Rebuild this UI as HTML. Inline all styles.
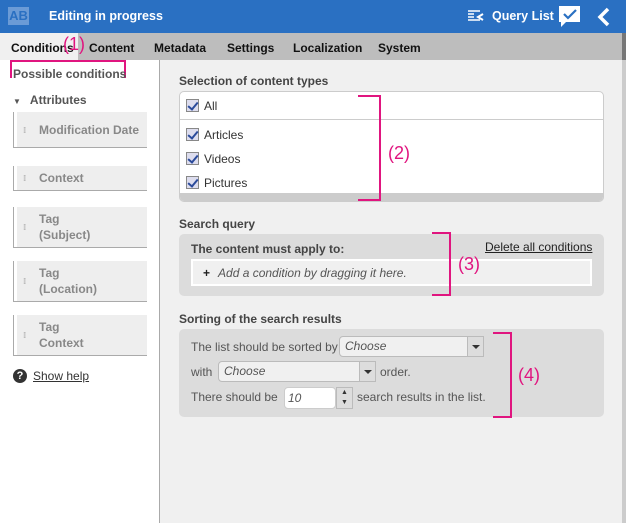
<!DOCTYPE html>
<html><head><meta charset="utf-8"><style>
*{box-sizing:border-box;margin:0;padding:0}
body{width:626px;height:523px;overflow:hidden;font-family:"Liberation Sans",sans-serif;font-size:12px;color:#333;background:#f0f0f0;position:relative}
.a{position:absolute}
.hdr{left:0;top:0;width:626px;height:33px;background:#2a70c2;color:#fff}
.tabs{left:0;top:33px;width:626px;height:27px;background:#bdbdbd}
.tab{position:absolute;top:8px;font-weight:bold;font-size:12px;color:#111}
.left{left:0;top:60px;width:160px;height:463px;background:#fff;border-right:1px solid #aaa}
.item{position:absolute;left:13px;width:134px;border-left:1px solid #aaa;border-bottom:1px solid #aaa;background:#fff}
.item div{margin-left:3px;background:#eee;color:#888;font-weight:bold;font-size:12px;padding:4px 0 4px 22px;line-height:16px;position:relative}
.item div:before{content:"⁞⁞";position:absolute;left:6px;top:50%;margin-top:-7px;font-size:8px;color:#bbb;letter-spacing:-2px}
.pink{position:absolute;border:2px solid #e0157f;border-left:none}
.pl{position:absolute;color:#e0157f;font-size:18px}
.h{position:absolute;font-weight:bold;font-size:12px;color:#444}
.cb{display:inline-block;width:13px;height:13px;border:1px solid #888;background:#dde;vertical-align:-2px;margin-right:5px;position:relative}
.cb:after{content:"";position:absolute;left:3px;top:0px;width:4px;height:8px;border:solid #2a4a9a;border-width:0 2px 2px 0;transform:rotate(40deg)}
.sel{position:absolute;height:21px;background:#f0f0f0;border:1px solid #bbb;border-radius:4px 0 0 4px;font-style:italic;color:#555;padding:2px 5px;font-size:12px}
.sel b{position:absolute;right:0;top:0;width:16px;height:19px;background:#ddd;border-left:1px solid #bbb}
.sel b:after{content:"";position:absolute;left:4px;top:8px;border:4px solid transparent;border-top:4px solid #333;border-bottom:none}
</style></head><body>
<div class="a hdr">
 <div class="a" style="left:8px;top:7px;width:21px;height:18px;background:#6b9bd6;color:#2a70c2;font-weight:bold;font-size:13px;text-align:center;line-height:18px">AB</div>
 <div class="a" style="left:49px;top:9px;font-weight:bold;font-size:12.5px">Editing in progress</div>
 <svg class="a" style="left:468px;top:10px" width="16" height="12"><path d="M0 1h12M0 4h6M0 7h6M0 10h12" stroke="#fff" stroke-width="1.5"/><path d="M15 4l-5 3 5 3" stroke="#fff" stroke-width="2" fill="none"/></svg>
 <div class="a" style="left:492px;top:9px;font-weight:bold;font-size:12.5px">Query List</div>
 <svg class="a" style="left:558px;top:5px" width="24" height="24"><path d="M1 1h21v16H8l-5 5v-5H1z" fill="#fff"/><path d="M6 9l4 4 8-8" stroke="#2a70c2" stroke-width="2.2" fill="none"/></svg>
 <svg class="a" style="left:597px;top:7px" width="14" height="20"><path d="M11 2L3 10l8 8" stroke="#fff" stroke-width="3.5" fill="none"/></svg>
</div>
<div class="a tabs">
 <div class="a" style="left:0;top:0;width:78px;height:27px;background:#f0f0f0"></div>
 <span class="tab" style="left:11px">Conditions</span>
 <span class="tab" style="left:89px">Content</span>
 <span class="tab" style="left:154px">Metadata</span>
 <span class="tab" style="left:227px">Settings</span>
 <span class="tab" style="left:293px">Localization</span>
 <span class="tab" style="left:378px">System</span>
</div>
<div class="pl" style="left:63px;top:34px">(1)</div>
<div class="a" style="left:622px;top:33px;width:4px;height:490px;background:#ccc"></div>
<div class="a" style="left:622px;top:33px;width:4px;height:27px;background:#777"></div>
<div class="a left">
 <div class="a" style="left:10px;top:0;width:116px;height:18px;border:2px solid #e0157f;border-bottom:none"></div>
 <div class="a" style="left:13px;top:7px;font-weight:bold;color:#555;font-size:12px">Possible conditions</div>
 <div class="a" style="left:13px;top:33px;font-weight:bold;color:#555;font-size:12px"><span style="font-size:8px;margin-right:9px">▼</span>Attributes</div>
 <div class="item" style="top:52px"><div style="padding-top:10px;padding-bottom:9px">Modification Date</div></div>
 <div class="item" style="top:106px"><div>Context</div></div>
 <div class="item" style="top:147px"><div>Tag<br>(Subject)</div></div>
 <div class="item" style="top:201px"><div>Tag<br>(Location)</div></div>
 <div class="item" style="top:255px"><div>Tag<br>Context</div></div>
 <div class="a" style="left:13px;top:309px;width:14px;height:14px;border-radius:50%;background:#333;color:#fff;font-weight:bold;font-size:11px;text-align:center;line-height:14px">?</div>
 <div class="a" style="left:33px;top:309px;text-decoration:underline;color:#333">Show help</div>
</div>

<div class="h" style="left:179px;top:74px">Selection of content types</div>
<div class="a" style="left:179px;top:91px;width:425px;height:111px;background:#fff;border:1px solid #ccc;border-radius:5px;overflow:hidden">
 <div class="a" style="left:6px;top:7px"><span class="cb"></span>All</div>
 <div class="a" style="left:0;top:27px;width:425px;height:1px;background:#ccc"></div>
 <div class="a" style="left:6px;top:36px"><span class="cb"></span>Articles</div>
 <div class="a" style="left:6px;top:60px"><span class="cb"></span>Videos</div>
 <div class="a" style="left:6px;top:84px"><span class="cb"></span>Pictures</div>
 <div class="a" style="left:0;top:101px;width:425px;height:10px;background:#ccc"></div>
</div>
<div class="pink" style="left:358px;top:95px;width:23px;height:106px"></div>
<div class="pl" style="left:388px;top:143px">(2)</div>

<div class="h" style="left:179px;top:217px">Search query</div>
<div class="a" style="left:179px;top:234px;width:425px;height:62px;background:#dcdcdc;border-radius:5px"></div>
<div class="h" style="left:191px;top:242px">The content must apply to:</div>
<div class="a" style="left:485px;top:240px;text-decoration:underline;color:#222">Delete all conditions</div>
<div class="a" style="left:191px;top:259px;width:401px;height:27px;background:#f0f0f0;border:2px solid #fff;padding:5px 0 0 10px;font-style:italic;color:#555"><b style="font-style:normal;color:#222;margin-right:8px">+</b>Add a condition by dragging it here.</div>
<div class="pink" style="left:432px;top:232px;width:19px;height:64px"></div>
<div class="pl" style="left:458px;top:254px">(3)</div>

<div class="h" style="left:179px;top:312px">Sorting of the search results</div>
<div class="a" style="left:179px;top:329px;width:425px;height:88px;background:#dcdcdc;border-radius:5px"></div>
<div class="a" style="left:191px;top:340px;color:#555">The list should be sorted by</div>
<div class="sel" style="left:339px;top:336px;width:145px">Choose<b></b></div>
<div class="a" style="left:191px;top:365px;color:#555">with</div>
<div class="sel" style="left:218px;top:361px;width:158px">Choose<b></b></div>
<div class="a" style="left:380px;top:365px;color:#555">order.</div>
<div class="a" style="left:191px;top:390px;color:#555">There should be</div>
<div class="a" style="left:284px;top:387px;width:52px;height:22px;background:#fff;border:1px solid #ccc;border-radius:4px;font-style:italic;color:#555;padding:3px 0 0 3px">10</div>
<div class="a" style="left:336px;top:387px;width:17px;height:22px;background:#ddd;border:1px solid #bbb;font-size:7px;line-height:10px;text-align:center">▲<br>▼</div>
<div class="a" style="left:357px;top:390px;color:#555">search results in the list.</div>
<div class="pink" style="left:493px;top:332px;width:19px;height:86px"></div>
<div class="pl" style="left:518px;top:365px">(4)</div>
</body></html>
